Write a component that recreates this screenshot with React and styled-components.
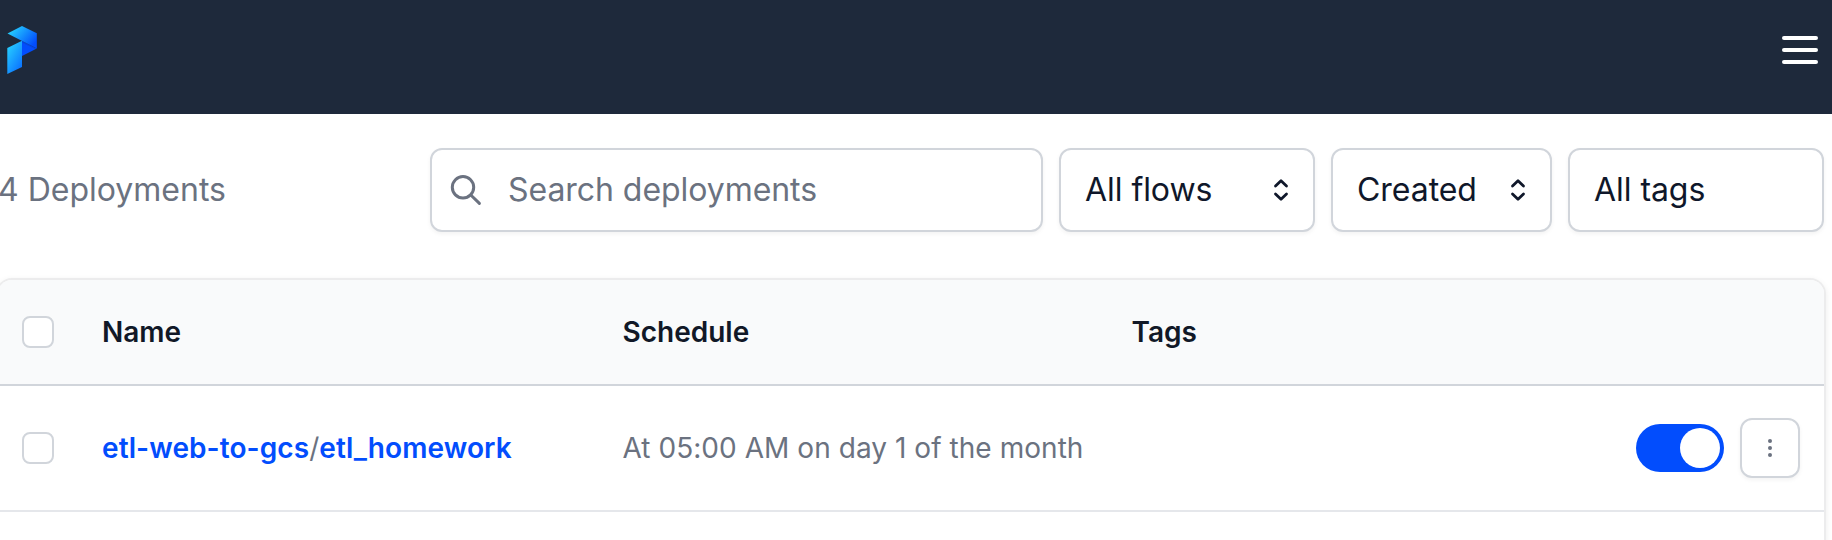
import React from "react";
import styled, { createGlobalStyle } from "styled-components";

const GlobalStyle = createGlobalStyle`
  *, *::before, *::after { box-sizing: border-box; }
  html, body { margin: 0; background: #fff; }
  body {
    height: 540px;
    overflow: hidden;
    font-family: Inter, "Liberation Sans", sans-serif;
    font-size: 32px;
    color: #0f172a;
  }
  svg { display: block; flex: none; }
`;

const Page = styled.div`
  width: 1832px;
  height: 540px;
  overflow: hidden;
  background: #fff;
`;

const TopBar = styled.header`
  display: flex;
  justify-content: space-between;
  align-items: flex-start;
  height: 114px;
  padding: 26px 14px 0 7px;
  background: #1e293b;
`;

const MenuButton = styled.button`
  display: flex;
  flex-direction: column;
  gap: 8px;
  width: 36px;
  margin: 10px 0 0;
  padding: 0;
  border: 0;
  background: none;
`;

const MenuBar = styled.span`
  height: 4px;
  border-radius: 2px;
  background: #fff;
`;

const Main = styled.main`
  width: 1826px;
  margin-left: -2px;
  padding-top: 34px;
`;

const Toolbar = styled.div`
  display: flex;
  align-items: center;
  gap: 16px;
  height: 84px;
`;

const Count = styled.div`
  width: 416px;
  line-height: 48px;
  color: #6b7280;
`;

const Field = styled.div`
  display: flex;
  align-items: center;
  justify-content: space-between;
  width: ${({ $width }) => $width}px;
  height: 84px;
  padding: 0 12px 0 24px;
  border: 2px solid #d1d5db;
  border-radius: 12px;
  background: #fff;
  box-shadow: 0 2px 4px rgba(0, 0, 0, 0.05);
  line-height: 48px;
  letter-spacing: -0.05px;
  white-space: nowrap;
`;

const SearchField = styled(Field)`
  justify-content: flex-start;
  gap: 24px;
  padding-left: 18px;
  color: #6b7280;
`;

const Table = styled.section`
  height: 300px;
  margin-top: 48px;
  border-radius: 14px 14px 0 0;
  box-shadow: 0 0 0 2px #ececed, 0 2px 6px 2px rgba(0, 0, 0, 0.08);
  background: #fff;
  overflow: hidden;
  font-size: 28px;
  line-height: 40px;
`;

const Row = styled.div`
  display: grid;
  grid-template-columns: 32px 521px 509px 503px 164px;
  align-items: center;
  height: 126px;
  padding-left: 24px;
  border-bottom: 2px solid #e5e7eb;
  color: #6b7280;
`;

const HeadRow = styled(Row)`
  height: 106px;
  border-bottom-color: #d1d5db;
  background: #f9fafb;
  color: #111827;
  font-weight: 600;
`;

const Checkbox = styled.span`
  width: 32px;
  height: 32px;
  border: 2px solid #d1d5db;
  border-radius: 8px;
  background: #fff;
`;

const NameCell = styled.div`
  padding-left: 48px;
  white-space: nowrap;
`;

const Cell = styled.div`
  padding-left: 47.5px;
  white-space: nowrap;
`;

const Schedule = styled(Cell)`
  letter-spacing: 0.05px;
`;

const Link = styled.a`
  color: #024dfd;
  font-weight: 600;
  letter-spacing: 0.09px;
`;

const Actions = styled.div`
  grid-column: 5;
  display: flex;
  align-items: center;
  justify-content: space-between;
  margin-left: 49px;
  width: 164px;
`;

const Toggle = styled.span`
  display: flex;
  justify-content: flex-end;
  width: 88px;
  height: 48px;
  padding: 4px;
  border-radius: 24px;
  background: #024dfd;
`;

const Knob = styled.span`
  width: 40px;
  height: 40px;
  border-radius: 50%;
  background: #fff;
`;

const MoreButton = styled.button`
  display: flex;
  align-items: center;
  justify-content: center;
  width: 60px;
  height: 60px;
  padding: 0;
  border: 2px solid #d1d5db;
  border-radius: 12px;
  background: #fff;
  box-shadow: 0 2px 4px rgba(0, 0, 0, 0.05);
`;

const Logo = () => (
  <svg width="30" height="48" viewBox="0 0 30 48">
    <defs>
      <linearGradient id="top" x1="4" y1="2" x2="25" y2="20" gradientUnits="userSpaceOnUse">
        <stop stopColor="#26d3ff" />
        <stop offset="1" stopColor="#024dfd" />
      </linearGradient>
      <linearGradient id="stem" x1="0" y1="22" x2="20" y2="34" gradientUnits="userSpaceOnUse">
        <stop stopColor="#26ccff" />
        <stop offset="1" stopColor="#0a70ff" />
      </linearGradient>
      <linearGradient id="fold" x1="22" y1="17" x2="19" y2="23" gradientUnits="userSpaceOnUse">
        <stop stopColor="#0638b4" />
        <stop offset="0.5" stopColor="#024dfd" />
      </linearGradient>
    </defs>
    <path d="M15 14.8 29.8 22.5 15 30Z" fill="url(#fold)" />
    <path d="M.5 7.5 15 0l14.8 7.3v15.2Z" fill="url(#top)" />
    <path d="M.3 22 15 14.8V41L.3 48Z" fill="url(#stem)" />
  </svg>
);

const SearchIcon = () => (
  <svg width="34" height="34" viewBox="0 0 34 34" fill="none" stroke="#6b7280" strokeWidth="3" strokeLinecap="round">
    <circle cx="13" cy="14.3" r="10.7" />
    <path d="m20.8 22 8.6 8.4" />
  </svg>
);

const Chevrons = () => (
  <svg width="40" height="40" viewBox="0 0 40 40" fill="none" stroke="#0f172a" strokeWidth="2.8" strokeLinecap="round" strokeLinejoin="round">
    <path d="m14.5 16 5.5-5.3 5.5 5.3M14.5 24l5.5 5.3 5.5-5.3" />
  </svg>
);

const Dots = () => (
  <svg width="4" height="18" viewBox="0 0 4 18" fill="#6b7280">
    <circle cx="2" cy="2" r="2" />
    <circle cx="2" cy="9" r="2" />
    <circle cx="2" cy="16" r="2" />
  </svg>
);

export default function App() {
  return (
    <Page>
      <GlobalStyle />
      <TopBar>
        <Logo />
        <MenuButton aria-label="Menu">
          <MenuBar />
          <MenuBar />
          <MenuBar />
        </MenuButton>
      </TopBar>
      <Main>
        <Toolbar>
          <Count>4 Deployments</Count>
          <SearchField $width={613}>
            <SearchIcon />
            <span>Search deployments</span>
          </SearchField>
          <Field $width={256}>
            <span>All flows</span>
            <Chevrons />
          </Field>
          <Field $width={221}>
            <span>Created</span>
            <Chevrons />
          </Field>
          <Field $width={256}>
            <span>All tags</span>
          </Field>
        </Toolbar>
        <Table>
          <HeadRow>
            <Checkbox />
            <NameCell>Name</NameCell>
            <Cell>Schedule</Cell>
            <Cell>Tags</Cell>
          </HeadRow>
          <Row>
            <Checkbox />
            <NameCell>
              <Link>etl-web-to-gcs</Link>/<Link>etl_homework</Link>
            </NameCell>
            <Schedule>At 05:00 AM on day 1 of the month</Schedule>
            <Actions>
              <Toggle>
                <Knob />
              </Toggle>
              <MoreButton aria-label="More">
                <Dots />
              </MoreButton>
            </Actions>
          </Row>
        </Table>
      </Main>
    </Page>
  );
}
